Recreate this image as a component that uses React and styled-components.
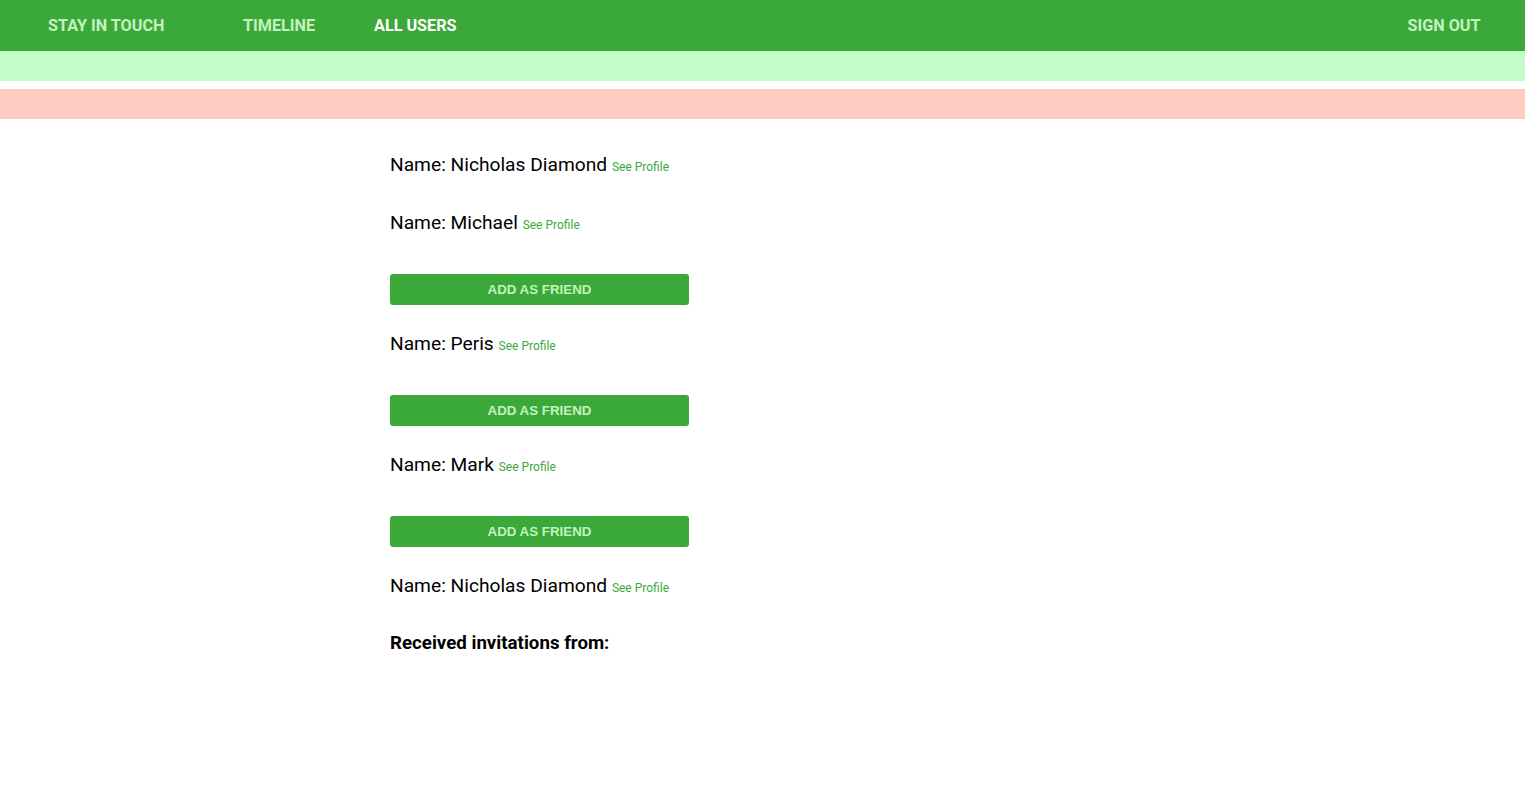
import React from 'react'
import styled, { createGlobalStyle } from "styled-components";

const GlobalStyle = createGlobalStyle`
  body {
    margin: 0;
    font-family: Roboto, "Liberation Sans", Arial, sans-serif;
    background: #fff;
    color: #000;
  }
`;

const StyledNavbar = styled.nav`
  display: flex;
  align-items: center;
  height: 51px;
  background-color: #3aa93a;
  padding-left: 48px;
  padding-right: 15px;
`;

const Brand = styled.a`
  color: #c4f2bf;
  font-weight: bold;
  font-size: 16.2px;
  text-transform: uppercase;
  text-decoration: none;
  margin-right: 49px;
`;

const NavItem = styled.a`
  color: ${(props) => (props.active ? "#ffffff" : "#c4f2bf")};
  font-weight: bold;
  font-size: 16.2px;
  text-transform: uppercase;
  text-decoration: none;
  padding: 0 29.5px;
  cursor: pointer;
  &:last-child {
    margin-left: auto;
  }
`;

const Notice = styled.div`
  height: 30px;
  margin-bottom: 8px;
  background-color: ${(props) => (props.type === "error" ? "#ffcbc2" : "#c3fcc8")};
`;

const Content = styled.main`
  display: flex;
  flex-direction: column;
  align-items: flex-start;
  padding: 9px 0 0 390px;
`;

const NameLine = styled.p`
  margin: 18px 0;
  font-size: 19.2px;
  line-height: 22px;
  height: 22px;
`;

const ProfileLink = styled.a`
  font-size: 12px;
  line-height: 1;
  color: #3aa93a;
  text-decoration: none;
  cursor: pointer;
`;

const FriendButton = styled.button`
  width: 299px;
  height: 31px;
  margin: 22px 0 10px;
  border: none;
  border-radius: 3px;
  background-color: #3aa93a;
  color: #c4f2bf;
  font-family: "Liberation Sans", Arial, sans-serif;
  font-size: 13.33px;
  font-weight: bold;
  text-transform: uppercase;
  cursor: pointer;
`;

const Heading = styled.h4`
  margin: 17px 0;
  font-size: 18.7px;
  line-height: 22px;
  font-weight: bold;
`;

const users = [
  { name: "Nicholas Diamond", canAdd: false },
  { name: "Michael", canAdd: true },
  { name: "Peris", canAdd: true },
  { name: "Mark", canAdd: true },
  { name: "Nicholas Diamond", canAdd: false },
];

export default function App() {
  return (
    <>
      <GlobalStyle />
      <StyledNavbar>
        <Brand>Stay in touch</Brand>
        <NavItem>Timeline</NavItem>
        <NavItem active>All users</NavItem>
        <NavItem>Sign out</NavItem>
      </StyledNavbar>
      <Notice type="notice" />
      <Notice type="error" />
      <Content>
        {users.map((user, i) => (
          <React.Fragment key={i}>
            <NameLine>
              Name: {user.name} <ProfileLink>See Profile</ProfileLink>
            </NameLine>
            {user.canAdd && <FriendButton>Add as friend</FriendButton>}
          </React.Fragment>
        ))}
        <Heading>Received invitations from:</Heading>
      </Content>
    </>
  );
}
